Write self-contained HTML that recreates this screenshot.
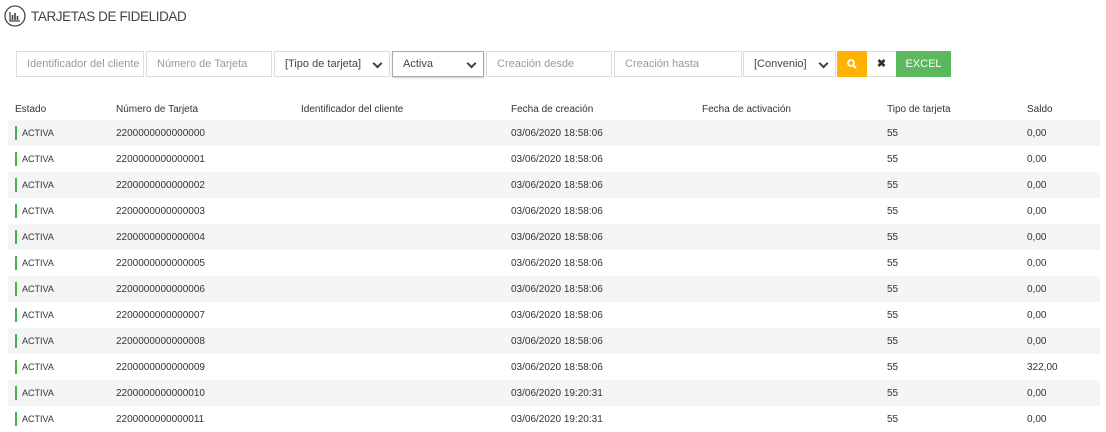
<!DOCTYPE html>
<html><head><meta charset="utf-8"><style>
body{margin:0;width:1106px;height:431px;background:#fff;font-family:"Liberation Sans",sans-serif;overflow:hidden;position:relative;color:#333}
.abs{position:absolute}
.title{left:31px;top:9px;font-size:13.5px;color:#444;letter-spacing:-0.4px}
.inp{position:absolute;top:51px;height:24px;border:1px solid #ddd;box-sizing:content-box;font-size:11px;color:#999;line-height:24px;padding-left:10px;white-space:nowrap;overflow:hidden}
.sel{color:#444}
.chev{position:absolute;right:8px;top:8px;width:5px;height:5px;border-right:2px solid #444;border-bottom:2px solid #444;transform:rotate(45deg)}
.hd{position:absolute;top:104px;font-size:10px;color:#333}
.row{position:absolute;left:8px;width:1092px;height:26px;font-size:10px;color:#333}
.row.s{background:#f5f5f5}
.row span{position:absolute;top:8px}
.bar{position:absolute;left:7px;top:6px;width:2px;height:14px;background:#4caf50}
</style></head><body>
<svg class="abs" style="left:4px;top:5px" width="22" height="22" viewBox="0 0 22 22"><circle cx="11" cy="11" r="10" fill="none" stroke="#444" stroke-width="1.3"/><path d="M6 7v9h10" fill="none" stroke="#444" stroke-width="1.3"/><path d="M8.5 10v5M11 8v7M13.5 11v4" stroke="#444" stroke-width="1.6"/></svg>
<div class="abs title">TARJETAS DE FIDELIDAD</div>
<div class="inp" style="left:16px;width:116px">Identificador del cliente</div>
<div class="inp" style="left:146px;width:114px">Número de Tarjeta</div>
<div class="inp sel" style="left:274px;width:104px">[Tipo de tarjeta]<i class="chev"></i></div>
<div class="inp sel" style="left:392px;width:80px;border-color:#aaa;box-shadow:0 1px 2px rgba(0,0,0,.2)">Activa<i class="chev"></i></div>
<div class="inp" style="left:486px;width:114px">Creación desde</div>
<div class="inp" style="left:614px;width:116px">Creación hasta</div>
<div class="inp sel" style="left:743px;width:81px">[Convenio]<i class="chev"></i></div>
<div class="abs" style="left:837px;top:51px;width:30px;height:26px;background:#ffb300"><svg width="30" height="26"><circle cx="14" cy="12" r="3" fill="none" stroke="#fff" stroke-width="1.8"/><path d="M16 14l3 3" stroke="#fff" stroke-width="2"/></svg></div>
<div class="abs" style="left:867px;top:51px;width:29px;height:24px;border:1px solid #ddd;border-left:0;text-align:center;line-height:24px;font-size:11px;font-weight:bold;color:#333">✖</div>
<div class="abs" style="left:896px;top:51px;width:55px;height:26px;background:#5cb85c;color:#fff;font-size:11px;line-height:26px;text-align:center">EXCEL</div>
<div class="hd" style="left:15px">Estado</div>
<div class="hd" style="left:116px">Número de Tarjeta</div>
<div class="hd" style="left:301px">Identificador del cliente</div>
<div class="hd" style="left:511px">Fecha de creación</div>
<div class="hd" style="left:702px">Fecha de activación</div>
<div class="hd" style="left:887px">Tipo de tarjeta</div>
<div class="hd" style="left:1027px">Saldo</div>
<div class="row s" style="top:120px"><i class="bar"></i><span style="left:14px;font-size:9px">ACTIVA</span><span style="left:108px">2200000000000000</span><span style="left:503px">03/06/2020 18:58:06</span><span style="left:879px">55</span><span style="left:1019px">0,00</span></div>
<div class="row" style="top:146px"><i class="bar"></i><span style="left:14px;font-size:9px">ACTIVA</span><span style="left:108px">2200000000000001</span><span style="left:503px">03/06/2020 18:58:06</span><span style="left:879px">55</span><span style="left:1019px">0,00</span></div>
<div class="row s" style="top:172px"><i class="bar"></i><span style="left:14px;font-size:9px">ACTIVA</span><span style="left:108px">2200000000000002</span><span style="left:503px">03/06/2020 18:58:06</span><span style="left:879px">55</span><span style="left:1019px">0,00</span></div>
<div class="row" style="top:198px"><i class="bar"></i><span style="left:14px;font-size:9px">ACTIVA</span><span style="left:108px">2200000000000003</span><span style="left:503px">03/06/2020 18:58:06</span><span style="left:879px">55</span><span style="left:1019px">0,00</span></div>
<div class="row s" style="top:224px"><i class="bar"></i><span style="left:14px;font-size:9px">ACTIVA</span><span style="left:108px">2200000000000004</span><span style="left:503px">03/06/2020 18:58:06</span><span style="left:879px">55</span><span style="left:1019px">0,00</span></div>
<div class="row" style="top:250px"><i class="bar"></i><span style="left:14px;font-size:9px">ACTIVA</span><span style="left:108px">2200000000000005</span><span style="left:503px">03/06/2020 18:58:06</span><span style="left:879px">55</span><span style="left:1019px">0,00</span></div>
<div class="row s" style="top:276px"><i class="bar"></i><span style="left:14px;font-size:9px">ACTIVA</span><span style="left:108px">2200000000000006</span><span style="left:503px">03/06/2020 18:58:06</span><span style="left:879px">55</span><span style="left:1019px">0,00</span></div>
<div class="row" style="top:302px"><i class="bar"></i><span style="left:14px;font-size:9px">ACTIVA</span><span style="left:108px">2200000000000007</span><span style="left:503px">03/06/2020 18:58:06</span><span style="left:879px">55</span><span style="left:1019px">0,00</span></div>
<div class="row s" style="top:328px"><i class="bar"></i><span style="left:14px;font-size:9px">ACTIVA</span><span style="left:108px">2200000000000008</span><span style="left:503px">03/06/2020 18:58:06</span><span style="left:879px">55</span><span style="left:1019px">0,00</span></div>
<div class="row" style="top:354px"><i class="bar"></i><span style="left:14px;font-size:9px">ACTIVA</span><span style="left:108px">2200000000000009</span><span style="left:503px">03/06/2020 18:58:06</span><span style="left:879px">55</span><span style="left:1019px">322,00</span></div>
<div class="row s" style="top:380px"><i class="bar"></i><span style="left:14px;font-size:9px">ACTIVA</span><span style="left:108px">2200000000000010</span><span style="left:503px">03/06/2020 19:20:31</span><span style="left:879px">55</span><span style="left:1019px">0,00</span></div>
<div class="row" style="top:406px"><i class="bar"></i><span style="left:14px;font-size:9px">ACTIVA</span><span style="left:108px">2200000000000011</span><span style="left:503px">03/06/2020 19:20:31</span><span style="left:879px">55</span><span style="left:1019px">0,00</span></div>
</body></html>
